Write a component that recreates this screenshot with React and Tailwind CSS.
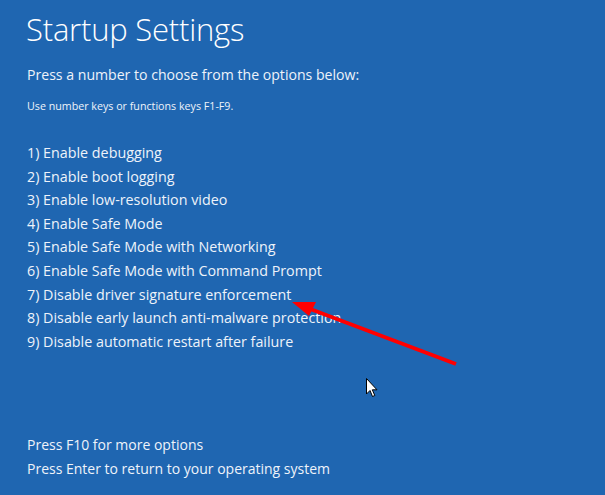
const OPTIONS = [
  "1) Enable debugging",
  "2) Enable boot logging",
  "3) Enable low-resolution video",
  "4) Enable Safe Mode",
  "5) Enable Safe Mode with Networking",
  "6) Enable Safe Mode with Command Prompt",
  "7) Disable driver signature enforcement",
  "8) Disable early launch anti-malware protection",
  "9) Disable automatic restart after failure",
];

export default function App() {
  return (
    <div
      className="relative h-[495px] w-[605px] overflow-hidden bg-[#1f66b1] text-[#eef3fa]"
      style={{ fontFamily: '"Open Sans", "Noto Sans", sans-serif' }}
    >
      <div className="flex h-full flex-col pl-[27px]">
        <h1 className="mt-[9px] -ml-[1px] text-[31px] font-light leading-[40px] tracking-[-0.2px] text-white">
          Startup Settings
        </h1>
        <p className="mt-[16px] text-[14.1px] leading-[20px]">
          Press a number to choose from the options below:
        </p>
        <p className="mt-[14px] text-[10.7px] leading-[14px]">
          Use number keys or functions keys F1-F9.
        </p>
        <ul className="mt-[28px] flex flex-col">
          {OPTIONS.map((o) => (
            <li key={o} className="h-[23.6px] text-[14.3px] leading-[23.6px]">
              {o}
            </li>
          ))}
        </ul>
        <div className="mt-auto mb-[14px] flex flex-col">
          <p className="h-[24px] text-[14px] leading-[24px]">Press F10 for more options</p>
          <p className="h-[24px] text-[14px] leading-[24px]">
            Press Enter to return to your operating system
          </p>
        </div>
      </div>

      {/* annotation arrow */}
      <svg className="absolute left-0 top-0" width="605" height="495">
        <line x1="456" y1="364" x2="305" y2="307" stroke="#ff0000" strokeWidth="4" />
        <polygon points="292,302 316,302 309,316" fill="#ff0000" />
      </svg>

      {/* mouse pointer */}
      <svg className="absolute left-[366px] top-[378px]" width="13" height="20" viewBox="0 0 13 20">
        <path
          d="M0.5 0.5 L0.5 16 L4 12.5 L6.5 18.5 L8.8 17.5 L6.3 11.8 L11 11.8 Z"
          fill="#fff"
          stroke="#000"
          strokeWidth="1"
        />
      </svg>
    </div>
  );
}
